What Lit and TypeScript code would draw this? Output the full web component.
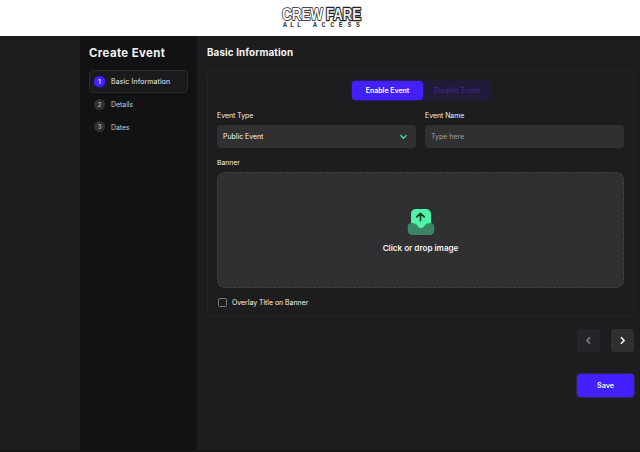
import { LitElement, html, svg, css } from "lit";
import { customElement } from "lit/decorators.js";
import { classMap } from "lit/directives/class-map.js";

const steps = ["Basic Information", "Details", "Dates"];

@customElement("crew-logo")
class CrewLogo extends LitElement {
  static styles = css`
    :host { display: block; height: 23px; }
    svg { display: block; overflow: visible; }
    .word { font: 700 16.5px "Liberation Sans", sans-serif; paint-order: stroke; stroke: #222; stroke-width: 1.7px; stroke-linejoin: round; fill: #fff; }
    .second { stroke-width: 2.6px; fill: #eee; }
    .tag { font: 700 6.5px "Liberation Mono", monospace; fill: #333; }
  `;
  render() {
    return html`<svg width="82" height="23" viewBox="0 0 82 23">
      ${svg`
        <text class="word" x="1" y="14" textLength="41" lengthAdjust="spacingAndGlyphs">CREW</text>
        <text class="word second" x="45" y="14" textLength="35" lengthAdjust="spacingAndGlyphs">FARE</text>
        <text class="tag" x="2" y="21.2" textLength="18">ALL</text>
        <text class="tag" x="32" y="21.2" textLength="47">ACCESS</text>`}
    </svg>`;
  }
}

@customElement("app-root")
class AppRoot extends LitElement {
  static styles = css`
    :host { display: block; width: 640px; height: 452px; overflow: hidden; background: #1d1d1f; color: #f4f4f5; font-family: Inter, sans-serif; font-size: 7.2px; line-height: 10px; }
    * { box-sizing: border-box; }
    svg { display: block; }
    header { height: 36px; background: #fff; display: flex; justify-content: center; padding: 6px 0 0 4px; }
    .body { height: 416px; display: grid; grid-template-columns: 80px 117px 1fr; border-bottom: 2px solid #191517; }
    .side { background: #121214; padding: 10px 0 0 9px; }
    h1, h2 { margin: 0; line-height: 14px; font-weight: 700; white-space: nowrap; }
    h1 { font-size: 11.4px; letter-spacing: .4px; }
    h2 { font-size: 9.8px; letter-spacing: .13px; }
    .steps { margin-top: 10px; width: 99px; }
    .step { height: 22.8px; display: flex; align-items: center; gap: 6px; padding-left: 4px; border: 1px solid transparent; border-radius: 4px; color: #c8c8ca; font-size: 6.9px; white-space: nowrap; }
    .step .name { padding-top: 2px; }
    .step.active { background: #1a1a1c; border-color: #29292c; color: #eee; letter-spacing: .15px; }
    .num { width: 11px; height: 11px; border-radius: 50%; background: #303032; color: #aaa; font-size: 5.8px; font-weight: 600; line-height: 11px; text-align: center; letter-spacing: 0; }
    .active .num { background: #4220ff; color: #fff; box-shadow: .5px .5px 2px #2c12c0; }
    main { padding: 10px 6px 0 10px; }
    .panel { margin-top: 10px; height: 247px; border: 1px solid #252527; border-radius: 6px; padding: 9px; }
    .toggle { display: flex; width: 139px; height: 21px; margin: 0 0 0 135px; border-radius: 4px; background: #211b38; }
    .toggle span { flex: 1; text-align: center; line-height: 21px; color: #3a22a5; font-weight: 500; font-size: 7px; border-radius: 4px; }
    .toggle .on { flex: 0 0 71px; background: #4220ff; color: #fff; font-weight: 600; box-shadow: 0 0 2px #3d20da; height: 19px; margin-top: 1px; line-height: 19px; letter-spacing: -.03px; }
    .fields { display: grid; grid-template-columns: 199px 199px; gap: 9px; margin-top: 9px; }
    .label { line-height: 11px; height: 14.5px; font-size: 6.8px; }
    .fields .label { font-size: 6.9px; }
    .input { height: 23.5px; border-radius: 4px; background: #303032; display: flex; align-items: center; justify-content: space-between; padding: 1px 8px 0 6px; font-size: 6.9px; letter-spacing: .02px; }
    .input.empty { color: #a0a0a2; letter-spacing: .06px; }
    .banner { margin-top: 9px; }
    .drop { height: 116px; border-radius: 8px; background: #303032; border: 1px dashed #414143; display: flex; flex-direction: column; align-items: center; padding-top: 35px; font-size: 8.1px; font-weight: 600; gap: 7.5px; }
    .check { display: flex; align-items: center; gap: 5px; margin-top: 10px; padding-left: 1px; font-size: 6.9px; }
    .box { width: 9px; height: 9px; border: 1px solid #7b7b7e; border-radius: 1.5px; }
    .pager { margin-top: 12px; display: flex; justify-content: flex-end; gap: 11px; }
    .page { width: 23px; height: 23px; border-radius: 3px; background: #303032; display: grid; place-items: center; color: #fff; }
    .page.off { background: #242528; color: #8a8a8d; }
    .save { margin: 22px 0 0 auto; width: 57px; height: 23px; border-radius: 4px; background: #4220ff; box-shadow: 0 0 2px #5a42e8; text-align: center; line-height: 23px; font-size: 7.2px; font-weight: 600; }
  `;

  private chevron(d: string, w: number) {
    return html`<svg width="11" height="11" viewBox="0 0 10 10" fill="none" stroke="currentColor" stroke-width=${w} stroke-linecap="round" stroke-linejoin="round"><path d=${d}></path></svg>`;
  }

  render() {
    return html`
      <header><crew-logo></crew-logo></header>
      <div class="body">
        <div></div>
        <div class="side">
          <h1>Create Event</h1>
          <div class="steps">
            ${steps.map((s, i) => html`<div class=${classMap({ step: true, active: i === 0 })}><span class="num">${i + 1}</span><span class="name">${s}</span></div>`)}
          </div>
        </div>
        <main>
          <h2>Basic Information</h2>
          <section class="panel">
            <div class="toggle"><span class="on">Enable Event</span><span>Disable Event</span></div>
            <div class="fields">
              <div><div class="label">Event Type</div>
                <div class="input"><span>Public Event</span>
                  <svg width="9" height="8" viewBox="0 0 9 8" fill="none" stroke="#4be5a4" stroke-width="1.3" stroke-linecap="round" stroke-linejoin="round"><path d="M1.700 2.400 4.500 5.200 7.300 2.400"></path></svg>
                </div></div>
              <div><div class="label">Event Name</div><div class="input empty">Type here</div></div>
            </div>
            <div class="banner"><div class="label">Banner</div>
              <div class="drop">
                <svg width="28" height="28" viewBox="0 0 28 28">
                  <path d="M10 2h10a5 5 0 0 1 5 5v16H5V7a5 5 0 0 1 5-5z" fill="#195c40"></path>
                  <path d="M8.500 1h10.500a5 5 0 0 1 5 5v12l-6 4-3 1-4-1-7-5V6a5 5 0 0 1 4.500-5z" fill="#50f4a5"></path>
                  <path d="M4.500 15c3.400 0 4.700 1.100 6 2.700 1.200 1.500 2 2.300 3.500 2.300s2.300-.8 3.500-2.300c1.300-1.600 2.600-2.700 6-2.700 2.200 0 3.800 1.600 3.800 3.800v3.600a4.600 4.600 0 0 1-4.600 4.600H5.300A4.600 4.600 0 0 1 .7 22.400v-3.600c0-2.200 1.600-3.800 3.800-3.800z" fill="#3a8565"></path>
                  <path d="M13.500 12.500V5.600M9.800 8.900l3.700-3.600 3.700 3.600" fill="none" stroke="#123c2a" stroke-width="1.700" stroke-linecap="round" stroke-linejoin="round"></path>
                </svg>
                <span>Click or drop image</span>
              </div></div>
            <div class="check"><span class="box"></span>Overlay Title on Banner</div>
          </section>
          <div class="pager">
            <div class="page off">${this.chevron("M6 2.500 3.500 5 6 7.500", 1.2)}</div>
            <div class="page">${this.chevron("M4 2.500 6.500 5 4 7.500", 1.5)}</div>
          </div>
          <div class="save">Save</div>
        </main>
      </div>`;
  }
}
